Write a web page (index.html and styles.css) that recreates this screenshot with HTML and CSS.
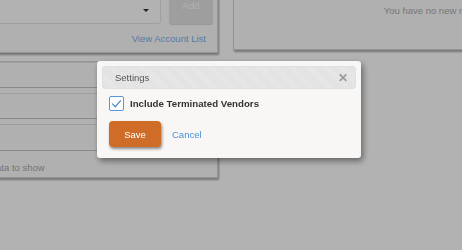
FILE: index.html
```html
<!DOCTYPE html>
<html lang="en">
<head>
    <meta charset="UTF-8">
    <meta name="viewport" content="width=device-width, initial-scale=1.0">
    <title>Vendor Settings</title>
    <link rel="stylesheet" href="styles.css">
</head>
<body>
    <div class="page">
        <div class="left-col">
            <div class="panel account-panel">
                <div class="account-row">
                    <div class="select-box"><span class="caret"></span></div>
                    <button class="add-btn" disabled>Add</button>
                </div>
                <div class="link-row"><a href="#">View Account List</a></div>
            </div>
            <div class="panel list-panel">
                <div class="list-item"></div>
                <div class="list-item"></div>
                <div class="list-item tall"></div>
                <div class="empty-text">No data to show</div>
            </div>
        </div>
        <div class="right-col">
            <div class="panel message-panel">
                <p class="message-text">You have no new messages</p>
            </div>
        </div>
    </div>

    <div class="overlay"></div>

    <div class="modal">
        <div class="modal-header">
            <span class="modal-title">Settings</span>
            <span class="modal-close">&#10005;</span>
        </div>
        <div class="modal-body">
            <label class="check-row">
                <span class="checkbox">
                    <svg width="16" height="16" viewBox="0 0 16 16">
                        <polyline points="3,8.5 6.5,12 13,4.5" fill="none" stroke="#4a8bd0" stroke-width="1.5" stroke-linecap="round" stroke-linejoin="round"/>
                    </svg>
                </span>
                <span class="check-label">Include Terminated Vendors</span>
            </label>
            <div class="modal-actions">
                <button class="save-btn">Save</button>
                <a href="#" class="cancel-link">Cancel</a>
            </div>
        </div>
    </div>
</body>
</html>
```

FILE: styles.css
```css
body {
    margin: 0;
    font-family: "Liberation Sans", Arial, sans-serif;
    font-size: 9.5px;
    background: #fff;
    overflow: hidden;
    height: 250px;
}

.page {
    display: flex;
    gap: 15px;
    margin: -30px 0 0 -40px;
}

/* background panels */
.left-col {
    flex: 0 0 258px;
    display: flex;
    flex-direction: column;
    gap: 8px;
}

.panel {
    background: #fcfcfc;
    border: 1px solid #d6d6d6;
    box-shadow: 1px 2px 2px rgba(0, 0, 0, 0.35);
}

.account-panel {
    padding: 22px 4px 8px 8px;
}

.account-row {
    display: flex;
    gap: 8px;
}

.select-box {
    flex: 1;
    height: 29px;
    border: 1px solid #e6e6e6;
    border-radius: 3px;
    background: #fff;
    position: relative;
}

.caret {
    position: absolute;
    right: 11px;
    top: 15px;
    border-left: 3px solid transparent;
    border-right: 3px solid transparent;
    border-top: 3px solid #333;
}

.add-btn {
    width: 44px;
    height: 31px;
    padding: 0 0 6px;
    border: 1px solid #e4e4e4;
    border-radius: 3px;
    background: #e2e2e2;
    color: #fff;
    font-family: inherit;
    font-size: 9.5px;
    box-shadow: 0 1px 1px rgba(0, 0, 0, 0.15);
}

.link-row {
    text-align: right;
    padding: 9px 7px 0 0;
}

.link-row a {
    color: #78b2ee;
    text-decoration: none;
}

.list-panel {
    padding: 0 0 8px 0;
    height: 107px;
}

.list-item {
    height: 24px;
    border-bottom: 1px solid #c4c4c4;
    border-top: 1px solid #e2e2e2;
    margin-bottom: 5px;
}

.list-item.tall {
    height: 25px;
}

.empty-text {
    padding: 6px 0 0 15px;
    color: #a8a8a8;
}

.right-col {
    flex: 0 0 420px;
}

.message-panel {
    height: 78px;
}

.message-text {
    margin: 34px 0 0;
    text-align: center;
    color: #ababab;
}

.overlay {
    position: fixed;
    inset: 0;
    background: rgba(0, 0, 0, 0.3);
}

/* modal */
.modal {
    position: fixed;
    left: 97px;
    top: 61px;
    width: 254px;
    padding: 5px;
    background: #f8f7f5;
    border-radius: 3px;
    box-shadow: 2px 3px 6px rgba(0, 0, 0, 0.45);
}

.modal-header {
    height: 21px;
    display: flex;
    align-items: center;
    justify-content: space-between;
    padding: 0 7px 0 12px;
    border: 1px solid #e0e0e0;
    border-radius: 3px;
    background: repeating-linear-gradient(45deg, #e1e1e1 0 1px, #e8e8e8 1px 2px);
}

.modal-title {
    color: #555;
}

.modal-close {
    color: #9a9a9a;
    font-size: 12px;
    font-weight: bold;
}

.modal-body {
    padding: 7px 0 6px 7px;
}

.check-row {
    display: flex;
    align-items: center;
    gap: 6px;
}

.checkbox {
    width: 13px;
    height: 13px;
    border: 1.5px solid #5a95d5;
    border-radius: 2px;
    background: #fff;
    display: flex;
    align-items: center;
    justify-content: center;
}

.checkbox svg {
    width: 13px;
    height: 13px;
}

.check-label {
    font-weight: bold;
    font-size: 9.7px;
    color: #333;
}

.modal-actions {
    display: flex;
    align-items: center;
    gap: 11px;
    margin-top: 10px;
}

.save-btn {
    width: 52px;
    height: 26px;
    border: none;
    border-radius: 4px;
    background: #cf6c28;
    color: #fff;
    font-family: inherit;
    font-size: 9.5px;
    box-shadow: 1px 2px 3px rgba(0, 0, 0, 0.45);
}

.cancel-link {
    color: #4a90d9;
    text-decoration: none;
}
```
